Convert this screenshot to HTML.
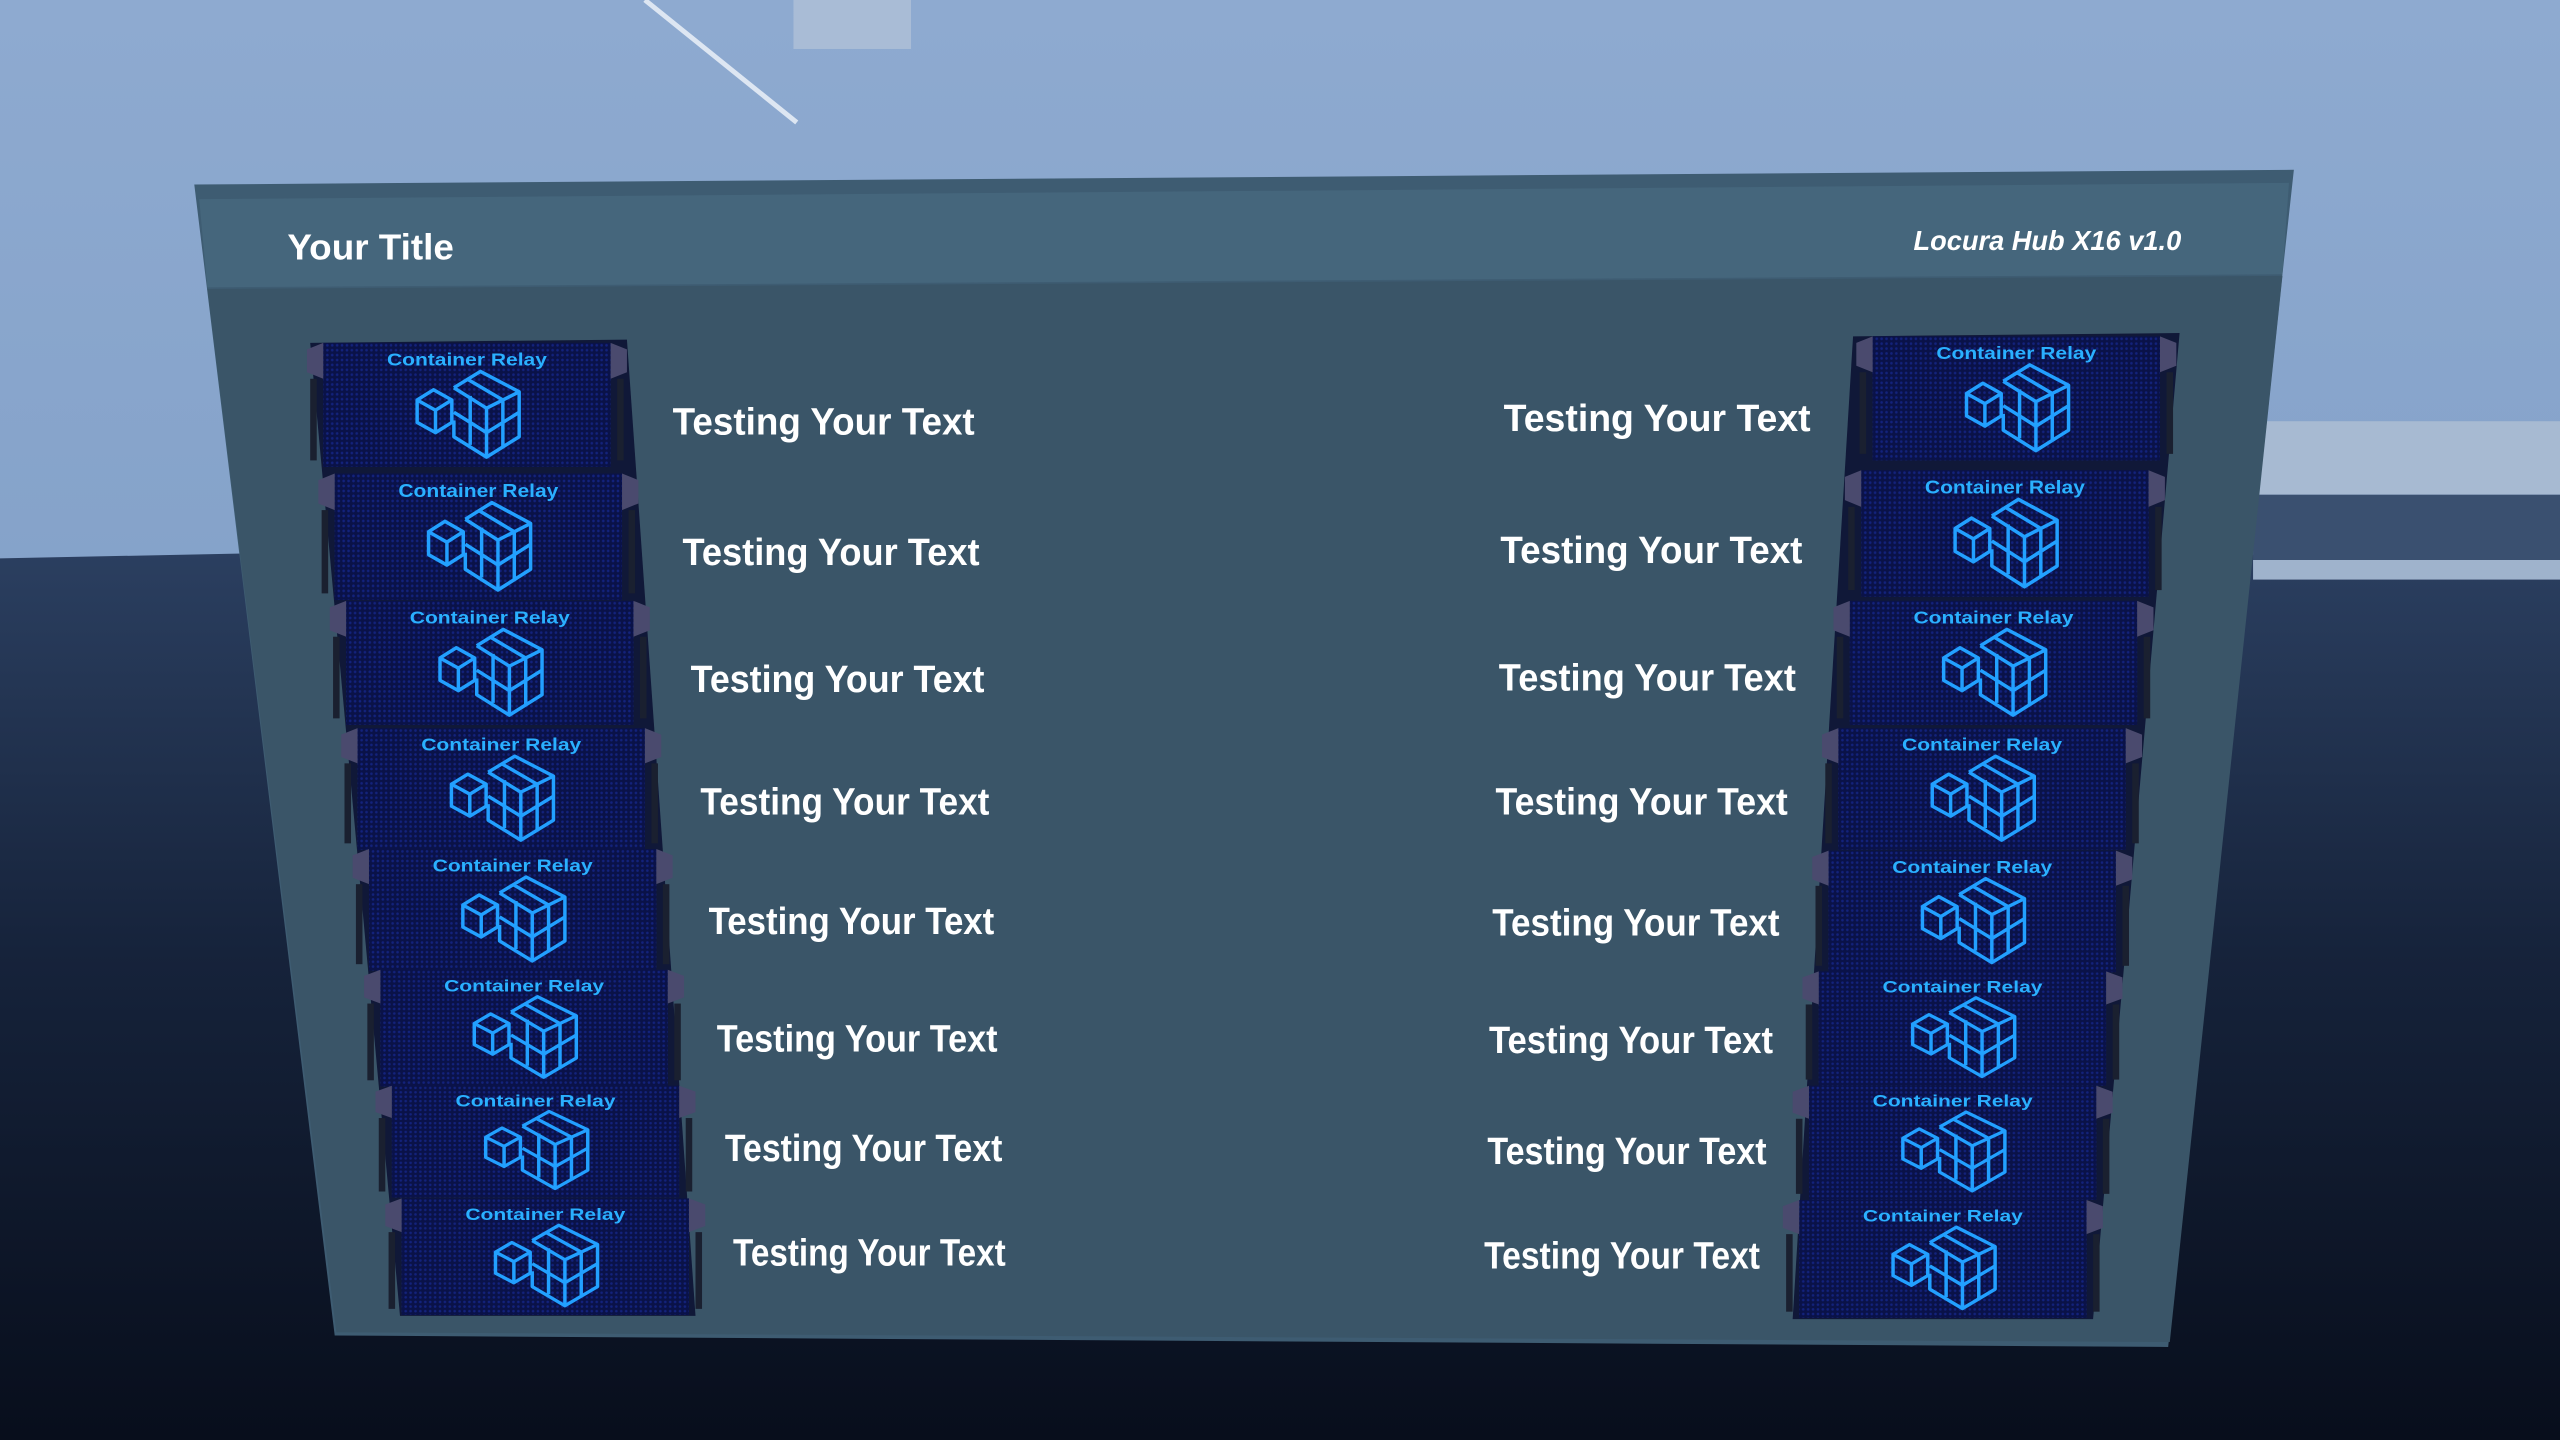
<!DOCTYPE html>
<html><head><meta charset="utf-8"><style>
html,body{margin:0;padding:0;width:2560px;height:1440px;overflow:hidden;background:#1a2638}
svg{display:block}
text{font-family:"Liberation Sans",sans-serif;font-weight:bold}
</style></head><body>
<svg width="2560" height="1440" viewBox="0 0 1568 882" xmlns="http://www.w3.org/2000/svg">
<defs>
<linearGradient id="sky" x1="0" y1="0" x2="0" y2="1">
<stop offset="0" stop-color="#8eaad0"/><stop offset="1" stop-color="#7797c0"/></linearGradient>
<linearGradient id="floor" x1="0" y1="0" x2="0" y2="1">
<stop offset="0" stop-color="#2b3f60"/><stop offset="0.45" stop-color="#16233b"/><stop offset="1" stop-color="#080e1c"/></linearGradient>
<pattern id="dots" width="3" height="3" patternUnits="userSpaceOnUse"><rect width="3" height="3" fill="#0a1248"/><circle cx="1.5" cy="1.5" r="0.8" fill="#1a30a8" opacity="0.55"/></pattern>
<g id="cube" fill="none" stroke="#22a0ff" stroke-width="1.7" stroke-linejoin="round">
<path d="M-26,-12 L-18,-17 L-9,-12 L-9,-1 L-17,4 L-26,-1 Z M-26,-12 L-17,-7 L-9,-12 M-17,-7 L-17,4"/>
<path d="M-8,-18 L5,-26 L24,-16 L24,6 L8,16 L-8,6 L-8,-2 M-8,-18 L8,-8 L24,-16 M8,-8 L8,16 M-1,-22 L16,-12 M-8,-6 L8,4 L24,-6 M16,-12 L16,11 M0,-14 L0,10"/>
</g>
<g id="c">
<rect x="-88" y="0" width="176" height="76" fill="url(#dots)"/>
<text x="0" y="14" font-size="11" fill="#2ab0ff" text-anchor="middle" textLength="98" lengthAdjust="spacingAndGlyphs">Container Relay</text>
<use href="#cube" transform="translate(2,50) scale(1.25)"/>
<path d="M-98,4 L-88,0 L-88,22 L-98,18 Z M98,4 L88,0 L88,22 L98,18 Z" fill="#4a4a6e"/>
<rect x="-96" y="22" width="4" height="50" fill="#1a2030"/>
<rect x="92" y="22" width="4" height="50" fill="#1a2030"/>
</g>
</defs>
<rect width="1568" height="882" fill="url(#sky)"/>
<path d="M0,342 L200,338 L1568,340 L1568,882 L0,882 Z" fill="url(#floor)"/>
<rect x="486" y="0" width="72" height="30" fill="#a9bcd6"/>
<line x1="395" y1="0" x2="488" y2="75" stroke="#dde6f2" stroke-width="3"/>
<rect x="1380" y="258" width="188" height="45" fill="#a7bad2"/>
<rect x="1380" y="303" width="188" height="40" fill="#3a5070"/>
<rect x="1380" y="343" width="188" height="12" fill="#9fb3cc"/>
<!-- panel -->
<path d="M119,113 L1405,104 L1398,168 L1328,825 L205,818 Z" fill="#3e5c72"/>
<path d="M122,122 L1402,112 L1398,168 L127,176 Z" fill="#45667c"/>
<path d="M127,177 L1398,169 L1329,822 L206,816 Z" fill="#3a5568"/>
<text x="176" y="159" font-size="22" fill="#ffffff" textLength="102" lengthAdjust="spacingAndGlyphs">Your Title</text>
<text x="1336" y="153" font-size="17" fill="#ffffff" text-anchor="end" font-style="italic" textLength="164" lengthAdjust="spacingAndGlyphs">Locura Hub X16 v1.0</text>
<!-- left column -->
<path d="M190,210 L384,208 L426,806 L245,806 Z" fill="#101838"/>
<use href="#c" transform="translate(286,210)"/>
<use href="#c" transform="translate(293,290) scale(1,1.02)"/>
<use href="#c" transform="translate(300,368)"/>
<use href="#c" transform="translate(307,446) scale(1,0.98)"/>
<use href="#c" transform="translate(314,520) scale(1,0.98)"/>
<use href="#c" transform="translate(321,594) scale(1,0.94)"/>
<use href="#c" transform="translate(328,665) scale(1,0.9)"/>
<use href="#c" transform="translate(334,734) scale(1,0.94)"/>
<!-- right column -->
<path d="M1135,206 L1335,204 L1282,808 L1098,808 Z" fill="#101838"/>
<use href="#c" transform="translate(1235,206)"/>
<use href="#c" transform="translate(1228,288) scale(1,1.02)"/>
<use href="#c" transform="translate(1221,368)"/>
<use href="#c" transform="translate(1214,446) scale(1,0.98)"/>
<use href="#c" transform="translate(1208,521) scale(1,0.98)"/>
<use href="#c" transform="translate(1202,595) scale(1,0.92)"/>
<use href="#c" transform="translate(1196,665) scale(1,0.92)"/>
<use href="#c" transform="translate(1190,735) scale(1,0.95)"/>
<g font-size="23" fill="#ffffff">
<text x="412" y="266" textLength="185" lengthAdjust="spacingAndGlyphs">Testing Your Text</text>
<text x="418" y="346" textLength="182" lengthAdjust="spacingAndGlyphs">Testing Your Text</text>
<text x="423" y="424" textLength="180" lengthAdjust="spacingAndGlyphs">Testing Your Text</text>
<text x="429" y="499" textLength="177" lengthAdjust="spacingAndGlyphs">Testing Your Text</text>
<text x="434" y="572" textLength="175" lengthAdjust="spacingAndGlyphs">Testing Your Text</text>
<text x="439" y="644" textLength="172" lengthAdjust="spacingAndGlyphs">Testing Your Text</text>
<text x="444" y="711" textLength="170" lengthAdjust="spacingAndGlyphs">Testing Your Text</text>
<text x="449" y="775" textLength="167" lengthAdjust="spacingAndGlyphs">Testing Your Text</text>
</g>
<g font-size="23" fill="#ffffff">
<text x="921" y="264" textLength="188" lengthAdjust="spacingAndGlyphs">Testing Your Text</text>
<text x="919" y="345" textLength="185" lengthAdjust="spacingAndGlyphs">Testing Your Text</text>
<text x="918" y="423" textLength="182" lengthAdjust="spacingAndGlyphs">Testing Your Text</text>
<text x="916" y="499" textLength="179" lengthAdjust="spacingAndGlyphs">Testing Your Text</text>
<text x="914" y="573" textLength="176" lengthAdjust="spacingAndGlyphs">Testing Your Text</text>
<text x="912" y="645" textLength="174" lengthAdjust="spacingAndGlyphs">Testing Your Text</text>
<text x="911" y="713" textLength="171" lengthAdjust="spacingAndGlyphs">Testing Your Text</text>
<text x="909" y="777" textLength="169" lengthAdjust="spacingAndGlyphs">Testing Your Text</text>
</g>
</svg>
</body></html>
